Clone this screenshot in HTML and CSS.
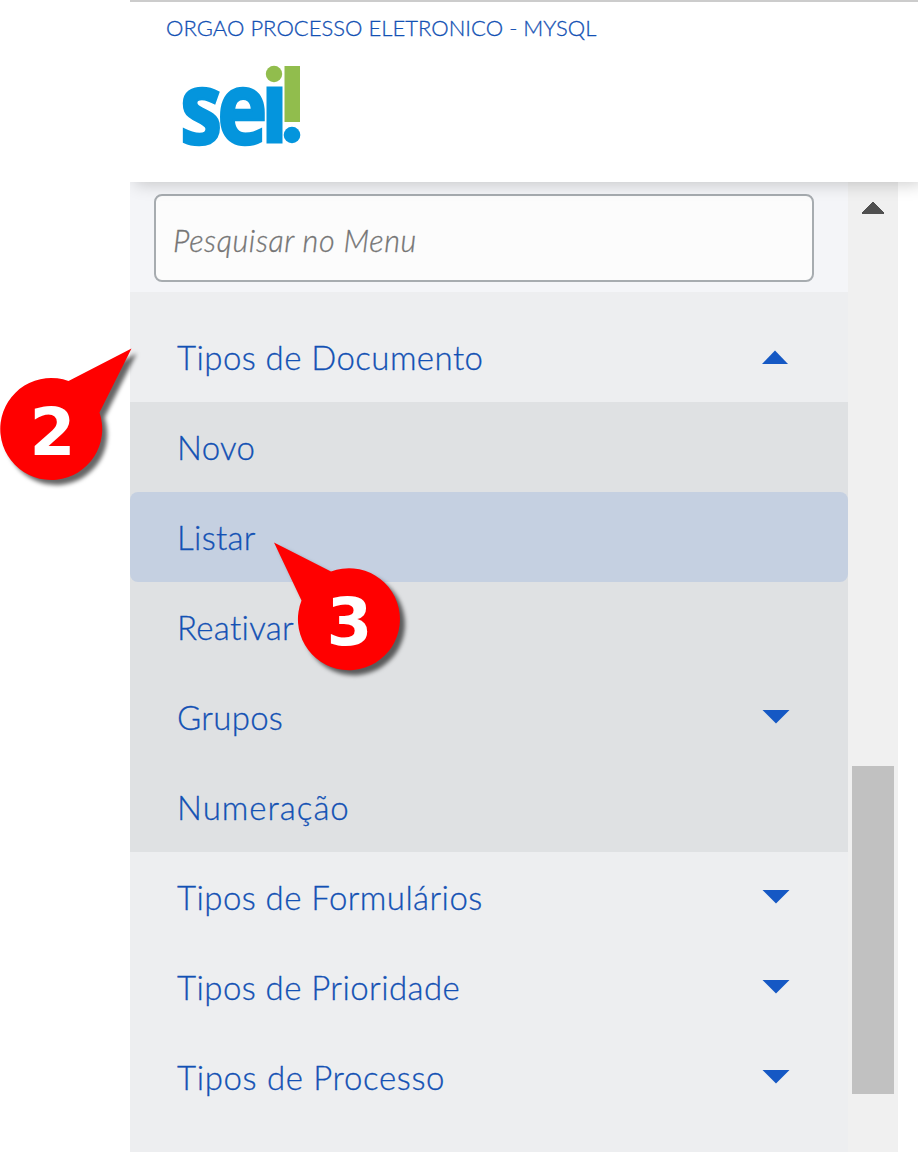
FILE: index.html
```html
<!DOCTYPE html>
<html lang="pt-BR">
<head>
<meta charset="utf-8">
<title>SEI - Menu</title>
<link rel="stylesheet" href="styles.css">
</head>
<body>
<div class="app">
  <header class="header">
    <div class="org"><span>ORGAO PROCESSO ELETRONICO - MYSQL</span></div>
    <svg class="logo" width="120" height="84" viewBox="0 0 120 84" role="img" aria-label="sei!">
      <g fill="#0495dd">
        <text class="logo-text" transform="translate(-2 79.500) scale(.84 1)" x="0" y="0">se</text>
        <rect x="84.500" y="22.500" width="16" height="57"/>
        <circle cx="110" cy="71" r="8.300"/>
      </g>
      <g fill="#91bd4d">
        <circle cx="92" cy="10" r="8.200"/>
        <rect x="102.500" y="2" width="15.500" height="56"/>
      </g>
    </svg>
  </header>
  <div class="content">
    <nav class="menu">
      <div class="search"><input class="search-input" type="text" placeholder="Pesquisar no Menu"></div>
      <ul class="list">
        <li class="item"><span class="label-wide">Tipos de Documento</span><svg class="arrow" width="28" height="14"><path d="M0 14 13 0.500 26 14Z"/></svg></li>
        <li class="item sub"><span class="label">Novo</span></li>
        <li class="sub"><div class="item selected"><span class="label">Listar</span></div></li>
        <li class="item sub"><span class="label">Reativar</span></li>
        <li class="item sub"><span class="label">Grupos</span><svg class="arrow" width="28" height="14"><path d="M0.500 0H27.500L14 13.500Z"/></svg></li>
        <li class="item sub"><span class="label-widest">Numeração</span></li>
        <li class="item"><span class="label-wide">Tipos de Formulários</span><svg class="arrow" width="28" height="14"><path d="M0.500 0H27.500L14 13.500Z"/></svg></li>
        <li class="item"><span class="label-wide">Tipos de Prioridade</span><svg class="arrow" width="28" height="14"><path d="M0.500 0H27.500L14 13.500Z"/></svg></li>
        <li class="item"><span class="label-wider">Tipos de Processo</span><svg class="arrow" width="28" height="14"><path d="M0.500 0H27.500L14 13.500Z"/></svg></li>
      </ul>
    </nav>
    <div class="scrollbar">
      <svg class="scroll-up" width="22" height="12" shape-rendering="crispEdges"><path d="M0 12V10.500L10 0H12L22 10.500V12Z"/></svg>
      <div class="thumb"></div>
    </div>
  </div>
</div>
<svg class="callout callout-two" width="150" height="150">
  <path d="M131.500 8.500 68.500 41A51 51 0 1 0 99.500 72.500Z"/>
  <text x="52.500" y="115">2</text>
</svg>
<svg class="callout callout-three" width="150" height="150">
  <path d="M4 2.500 61 31.500A51 51 0 1 1 31.500 60.500Z"/>
  <text x="79.500" y="105">3</text>
</svg>
</body>
</html>
```

FILE: styles.css
```css
* { box-sizing: border-box; }
body {
  margin: 0;
  height: 1152px;
  position: relative;
  overflow: hidden;
  background: #fff;
  color: #1351b4;
  font-family: Lato, sans-serif;
  font-weight: 300;
}
.app {
  width: 788px;
  height: 1152px;
  margin-left: 130px;
  display: flex;
  flex-direction: column;
  overflow: hidden;
}
.header {
  position: relative;
  z-index: 1;
  height: 182px;
  flex: none;
  border-top: 2px solid #ccc;
  background: #fff;
  padding: 12px 0 0 36px;
  box-shadow: 5px 2px 16px rgba(0, 0, 0, .2);
}
.org {
  height: 28px;
  line-height: 28px;
  font-size: 22px;
  letter-spacing: .02px;
  white-space: nowrap;
  -webkit-text-stroke: .3px #1351b4;
}
.logo { display: block; margin: 22px 0 0 16px; overflow: visible; }
.logo-text {
  font-family: "Open Sans", sans-serif;
  font-weight: 700;
  font-size: 101px;
  letter-spacing: -6px;
  stroke: #0495dd;
  stroke-width: 2.5px;
}
.content { flex: 1; display: flex; }
.menu { width: 718px; background: #edeef0; }
.search { height: 110px; padding: 12px 34px 10px 24px; background: #f4f5f8; }
.search-input {
  width: 660px;
  height: 88px;
  border: 2px solid #a7acb0;
  border-radius: 8px;
  background: #fcfcfc;
  padding: 4px 17px 0;
  font: italic 300 30.5px Lato, sans-serif;
  letter-spacing: .6px;
}
.search-input::placeholder { color: #757575; opacity: 1; -webkit-text-stroke: .3px #757575; }
.list { list-style: none; margin: 0; padding: 20px 0 0; }
.item {
  height: 90px;
  padding: 0 58px 0 47px;
  display: flex;
  align-items: center;
  justify-content: space-between;
  font-size: 33px;
  white-space: nowrap;
  font-variant-ligatures: none;
  -webkit-text-stroke: .3px #1351b4;
}
.label { letter-spacing: .3px; }
.label-wide { letter-spacing: .43px; }
.label-wider { letter-spacing: .65px; }
.label-widest { letter-spacing: 1px; }
.sub { background: #dfe1e3; }
.selected { background: #c5d0e1; border-radius: 8px; }
.arrow { fill: #1558c4; stroke: none; }
.scrollbar { width: 50px; padding: 20px 4px 0; background: #f0f0f0; }
.scroll-up { display: block; margin: 0 auto; fill: #505050; }
.thumb { height: 328px; margin-top: 552px; background: #c1c1c1; }
.callout { position: absolute; overflow: visible; fill: red; filter: drop-shadow(5px 5px 2px rgba(0, 0, 0, .6)); }
.callout text { fill: #fff; font: bold 66px "DejaVu Sans", sans-serif; text-anchor: middle; }
.callout-two { left: 0; top: 340px; }
.callout-three { left: 270px; top: 540px; }
```
